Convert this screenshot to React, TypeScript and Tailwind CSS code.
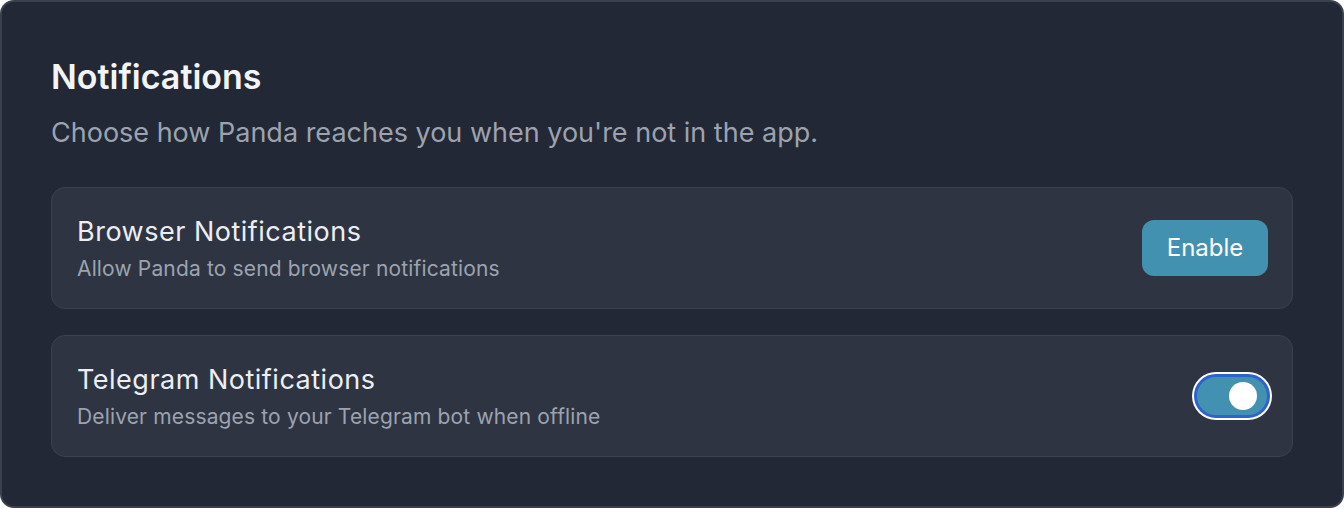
import React, { useState } from 'react';

function Toggle({ on, onChange }: { on: boolean; onChange: (v: boolean) => void }) {
  return (
    <button
      type="button"
      onClick={() => onChange(!on)}
      className="flex h-[48px] w-[80px] shrink-0 rounded-full bg-white p-[2px]"
    >
      <span
        className={`flex h-full w-full items-center rounded-full border-[3px] border-[#2d62cf] px-[10px] ${
          on ? 'justify-end bg-[#4391b0]' : 'justify-start bg-[#4b5563]'
        }`}
      >
        <span className="h-[28px] w-[28px] rounded-full bg-white" />
      </span>
    </button>
  );
}

export default function App() {
  const [telegram, setTelegram] = useState(true);

  return (
    <div className="h-[508px] w-full bg-white font-['Inter',sans-serif]">
      <div className="flex h-full flex-col rounded-[14px] border-2 border-[#3a404d] bg-[#222836] p-[49px]">
        {/* Header */}
        <h2 className="mt-[2px] text-[34px] font-semibold leading-[48px] text-[#f3f4f6]">Notifications</h2>
        <p className="mt-[12px] text-[27px] leading-[40px] text-[#9ca3af]">
          Choose how Panda reaches you when you're not in the app.
        </p>

        <div className="mt-[34px] flex flex-col gap-[26px]">
          {/* Browser */}
          <div className="flex h-[122px] items-center justify-between rounded-[14px] border border-[#3b4151] bg-[#2e3442] pl-[25px] pr-[24px]">
            <div className="pt-[2px]">
              <div className="text-[27px] font-normal leading-[36px] tracking-[0.5px] text-[#eceef2]">Browser Notifications</div>
              <div className="mt-[3px] text-[21px] leading-[32px] tracking-[0.15px] text-[#9ca3af]">Allow Panda to send browser notifications</div>
            </div>
            <button className="h-[56px] w-[126px] rounded-[12px] bg-[#4391b0] text-[24px] font-normal text-white">
              Enable
            </button>
          </div>

          {/* Telegram */}
          <div className="flex h-[122px] items-center justify-between rounded-[14px] border border-[#3b4151] bg-[#2e3442] pl-[25px] pr-[20px]">
            <div className="pt-[2px]">
              <div className="text-[27px] font-normal leading-[36px] tracking-[0.5px] text-[#eceef2]">Telegram Notifications</div>
              <div className="mt-[3px] text-[21px] leading-[32px] tracking-[0.15px] text-[#9ca3af]">Deliver messages to your Telegram bot when offline</div>
            </div>
            <Toggle on={telegram} onChange={setTelegram} />
          </div>
        </div>
      </div>
    </div>
  );
}
